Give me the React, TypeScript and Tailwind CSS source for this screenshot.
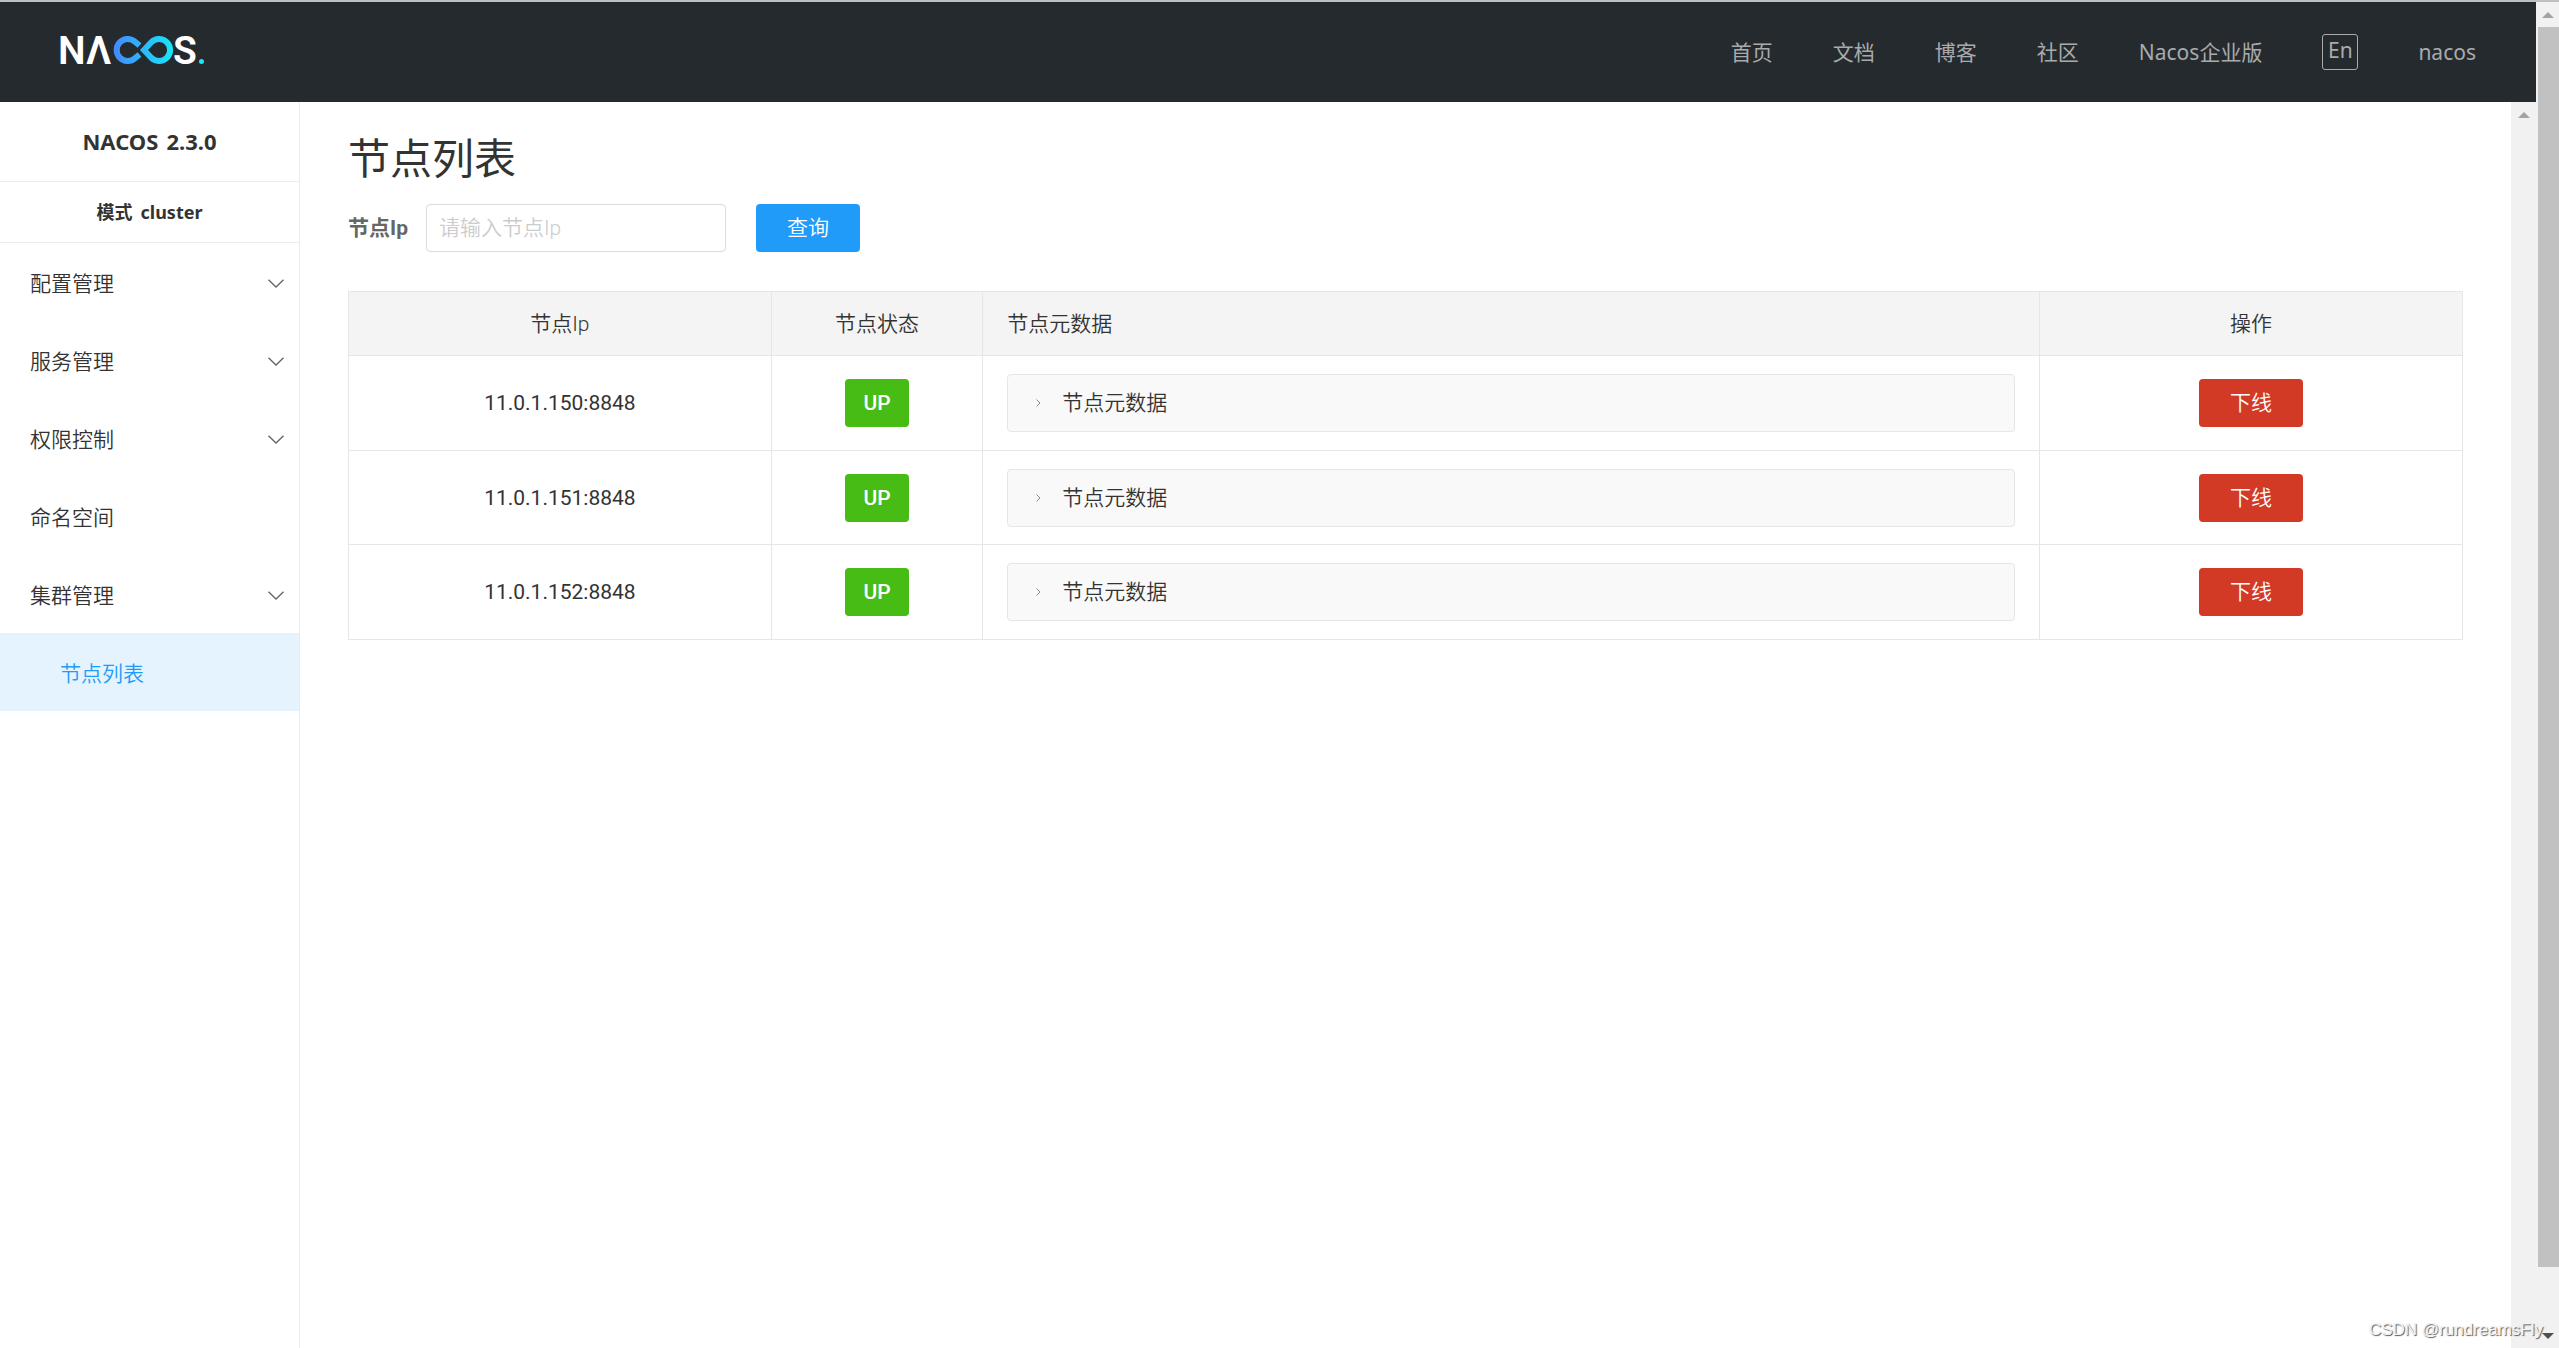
import React from "react";

const cjk = "font-[Roboto,'Noto_Sans_CJK_SC',sans-serif]";
const humanist = "font-['Noto_Sans','Noto_Sans_CJK_SC',sans-serif]";

const navLinks = ["首页", "文档", "博客", "社区", "Nacos企业版"];

const menu = [
  { label: "配置管理", expandable: true },
  { label: "服务管理", expandable: true },
  { label: "权限控制", expandable: true },
  { label: "命名空间", expandable: false },
  { label: "集群管理", expandable: true },
];

const nodes = ["11.0.1.150:8848", "11.0.1.151:8848", "11.0.1.152:8848"];

function Logo() {
  return (
    <svg width="160" height="60" viewBox="50 20 160 60" role="img" aria-label="NACOS." className="block">
      <defs>
        <linearGradient id="loop" gradientUnits="userSpaceOnUse" x1="113" y1="0" x2="173" y2="0">
          <stop offset="0" stopColor="#4488ff" />
          <stop offset="1" stopColor="#17e6f8" />
        </linearGradient>
      </defs>
      <g fill="#fff" fontFamily="Roboto, sans-serif" fontSize="39" fontWeight="600">
        <text x="58" y="64">N</text>
        <text x="86" y="64">Λ</text>
        <text x="173" y="64">S</text>
      </g>
      <g fill="none" stroke="url(#loop)" strokeWidth="6">
        <path d="M139.5 45.5 L135 41.8 A11 11 0 1 0 135 58.2 L139.5 54.5" />
        <path d="M144 50 L151 42.5 A11 11 0 1 1 151 57.5 Z" />
      </g>
      <circle cx="201.5" cy="61.5" r="2.5" fill="#17e6f8" />
    </svg>
  );
}

function ChevronDown() {
  return (
    <svg width="16" height="9" viewBox="0 0 16 9" fill="none" stroke="#666" strokeWidth="1.4" aria-hidden="true">
      <path d="M.5.7 8 8 15.5.7" />
    </svg>
  );
}

function ChevronRight() {
  return (
    <svg width="5" height="8" viewBox="0 0 5 8" fill="none" stroke="#888" strokeWidth="1" aria-hidden="true">
      <path d="M.5.5 4 4 .5 7.5" />
    </svg>
  );
}

function Arrow({ down = false }: { down?: boolean }) {
  return (
    <svg width="12" height="6" viewBox="0 0 12 6" aria-hidden="true">
      {down ? <path d="M0 0h12L6 6z" fill="#505050" /> : <path d="M0 6h12L6 0z" fill="#a3a3a3" />}
    </svg>
  );
}

function Header() {
  return (
    <header className={`flex h-[100px] shrink-0 items-center justify-between bg-[#252a2f] pl-[50px] ${humanist}`}>
      <a href="#home" className="pb-1"><Logo /></a>
      <nav className="flex items-center text-[21px] leading-8 text-[#a8aaac]">
        {navLinks.map((l) => (
          <a key={l} href="#nav" className="px-[30px]">{l}</a>
        ))}
        <button type="button" className="mx-[30px] flex h-9 w-9 items-center justify-center rounded-[3px] border border-[#a8aaac] pb-1">En</button>
        <a href="#user" className="pr-[60px] pl-[30px]">nacos</a>
      </nav>
    </header>
  );
}

function Sidebar() {
  return (
    <aside className="w-[300px] shrink-0 border-r border-[#ebebeb] text-[#333]">
      <h2 className={`flex h-20 items-center justify-center gap-2 border-b border-[#ebebeb] text-[22px] font-bold ${humanist}`}>
        <span>NACOS</span>
        <span>2.3.0</span>
      </h2>
      <h3 className={`flex h-[61px] items-center justify-center gap-2 border-b border-[#ebebeb] text-[18px] font-bold ${humanist}`}>
        <span>模式</span>
        <span>cluster</span>
      </h3>
      <ul className="text-[21px] font-[350]">
        {menu.map((m) => (
          <li key={m.label}>
            <button type="button" className="flex h-[78px] w-full items-center justify-between pt-0.5 pr-[15px] pl-[30px]">
              <span className="pt-1">{m.label}</span>
              {m.expandable && <ChevronDown />}
            </button>
          </li>
        ))}
        <li>
          <a href="#nodes" aria-current="page" className="flex h-[78px] items-center bg-[#e4f3fe] pt-0.5 pl-[60px] text-[#209bfa]">
            <span className="pt-1">节点列表</span>
          </a>
        </li>
      </ul>
    </aside>
  );
}

function NodeTable() {
  const cell = "border border-[#e6e6e6] p-0";
  const head = "border border-[#e6e6e6] px-6 pt-0.5 pb-0 font-[350]";
  return (
    <table className="mt-[39px] w-full table-fixed border-collapse text-center text-[21px] text-[#333]">
      <colgroup>
        <col className="w-[20%]" />
        <col className="w-[10%]" />
        <col className="w-[50%]" />
        <col className="w-[20%]" />
      </colgroup>
      <thead className="bg-[#f4f4f4]">
        <tr className="h-16">
          <th className={head}>节点Ip</th>
          <th className={head}>节点状态</th>
          <th className={`${head} text-left`}>节点元数据</th>
          <th className={head}>操作</th>
        </tr>
      </thead>
      <tbody>
        {nodes.map((n, i) => (
          <tr key={n} className={i === 1 ? "h-[94px]" : "h-[95px]"}>
            <td className="border border-[#e6e6e6] px-0 pt-0.5 pb-0">{n}</td>
            <td className={cell}>
              <span className="inline-flex h-12 w-16 items-center justify-center rounded-[4px] bg-[#46bc15] pt-0.5 align-middle font-medium text-white">UP</span>
            </td>
            <td className="border border-[#e6e6e6] px-6 py-0">
              <button type="button" aria-expanded="false" className="flex h-[58px] w-full items-center gap-[21px] rounded-[4px] border border-[#e6e6e6] bg-[#f9f9f9] pl-7 font-[350]">
                <ChevronRight />
                <span className="pt-0.5">节点元数据</span>
              </button>
            </td>
            <td className={cell}>
              <button type="button" className="h-12 w-[104px] rounded-[4px] bg-[#d23a26] pt-0.5 align-middle font-[350] text-white">下线</button>
            </td>
          </tr>
        ))}
      </tbody>
    </table>
  );
}

export default function App() {
  return (
    <div className={`relative flex h-screen flex-col border-t-2 border-[#bdc0c3] bg-white ${cjk}`}>
      <div className="flex min-h-0 flex-1">
        <div className="flex min-w-0 flex-1 flex-col">
          <Header />
          <div className="flex min-h-0 flex-1">
            <Sidebar />
            <main className="min-w-0 flex-1 px-12 pt-[25px]">
              <h1 className="text-[42px] leading-[66px] text-[#333]">节点列表</h1>
              <form className="mt-[11px] flex items-center text-[21px]" onSubmit={(e) => e.preventDefault()}>
                <label htmlFor="ip" className="mr-[18px] pt-0.5 font-bold text-[#666]">节点Ip</label>
                <input
                  id="ip"
                  type="text"
                  placeholder="请输入节点Ip"
                  className="h-12 w-[300px] rounded-[4px] border border-[#dcdcdc] px-3 font-[350] outline-none placeholder:text-[#ccc]"
                />
                <button type="submit" className="ml-[30px] h-12 w-[104px] rounded-[4px] bg-[#209bfa] pt-0.5 font-[350] text-white">查询</button>
              </form>
              <NodeTable />
            </main>
            <div className="flex w-[25px] shrink-0 flex-col items-center bg-[#f1f1f1] pt-[10px]">
              <Arrow />
            </div>
          </div>
        </div>
        <div className="flex w-[23px] shrink-0 flex-col items-center bg-[#f1f1f1] pt-[10px] pb-[9px]">
          <Arrow />
          <div className="mt-[9px] mb-[66px] w-[21px] flex-1 self-end bg-[#c1c1c1]" />
          <Arrow down />
        </div>
      </div>
      <p className="absolute right-4 bottom-1.5 font-['Liberation_Sans',sans-serif] text-[17px] leading-6 text-[#f4f4f4] [text-shadow:1px_1px_1px_#555]">CSDN @rundreamsFly</p>
    </div>
  );
}
